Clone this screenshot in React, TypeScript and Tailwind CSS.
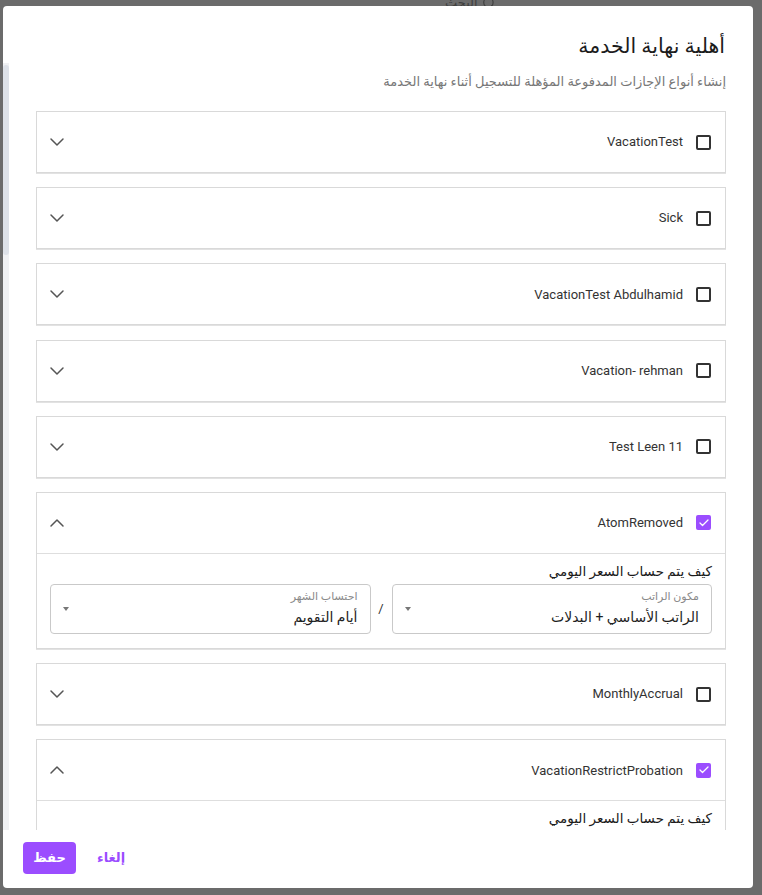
import React from 'react';
import { ChevronDown, ChevronUp, Check, Search } from 'lucide-react';

type Item = { name: string; checked: boolean };

const items: Item[] = [
  { name: 'VacationTest', checked: false },
  { name: 'Sick', checked: false },
  { name: 'VacationTest Abdulhamid', checked: false },
  { name: 'Vacation- rehman', checked: false },
  { name: 'Test Leen 11', checked: false },
  { name: 'AtomRemoved', checked: true },
  { name: 'MonthlyAccrual', checked: false },
  { name: 'VacationRestrictProbation', checked: true },
  { name: 'Annual Leave', checked: true },
  { name: 'Hajj Leave', checked: false },
];

const Checkbox: React.FC<{ checked: boolean }> = ({ checked }) =>
  checked ? (
    <span className="w-[15px] h-[15px] rounded-[2px] bg-[#9b4dff] flex items-center justify-center shrink-0">
      <Check size={12} strokeWidth={2.5} className="text-white" />
    </span>
  ) : (
    <span className="w-[15px] h-[15px] rounded-[2px] border-2 border-[#333333] shrink-0" />
  );

const SelectBox: React.FC<{ label: string; value: string }> = ({ label, value }) => (
  <div className="flex-1 h-[50px] border border-[#c9c9c9] rounded-[4px] flex items-center px-3">
    <div className="flex flex-col flex-1 leading-none">
      <span className="text-[11px] text-[#8a8a8a] leading-[14px]">{label}</span>
      <span className="text-[14px] text-[#1f1f1f] leading-[20px] mt-[3px]">{value}</span>
    </div>
    <span className="w-0 h-0 border-l-[3.5px] border-r-[3.5px] border-t-[4px] border-l-transparent border-r-transparent border-t-[#777777]" />
  </div>
);

const AccordionItem: React.FC<{ item: Item }> = ({ item }) => (
  <div className="border border-[#d9d9d9] shadow-[0_1px_0_#e2e2e2] bg-white shrink-0">
    <div className="h-[60px] flex items-center pr-[14px] pl-[8px]">
      <Checkbox checked={item.checked} />
      <span className="mr-[13px] text-[13px] text-[#333333]">{item.name}</span>
      <span className="mr-auto text-[#555555]">
        {item.checked ? <ChevronUp size={24} strokeWidth={1.5} /> : <ChevronDown size={24} strokeWidth={1.5} />}
      </span>
    </div>
    {item.checked && (
      <div className="border-t border-[#dedede] px-[13px] pt-[7px] pb-[14px]">
        <div className="text-[13.5px] text-[#1a1a1a] leading-[20px] font-medium mb-[3px]">كيف يتم حساب السعر اليومي</div>
        <div className="flex items-center">
          <SelectBox label="مكون الراتب" value="الراتب الأساسي + البدلات" />
          <span className="w-[21px] text-center text-[13px] text-[#333333]">/</span>
          <SelectBox label="احتساب الشهر" value="أيام التقويم" />
        </div>
      </div>
    )}
  </div>
);

export default function App() {
  return (
    <div
      className="relative w-full h-[895px] bg-[#6b6b6b] overflow-hidden"
      style={{ fontFamily: "Roboto, 'Noto Sans', 'DejaVu Sans', sans-serif" }}
    >
      <div dir="rtl" className="absolute top-[-7px] left-[445px] flex items-center gap-1 text-[13px] text-[#3f3f3f]">
        <Search size={14} />
        <span>البحث</span>
      </div>

      <div dir="rtl" className="absolute left-[3px] top-[6px] w-[750px] h-[882px] bg-white rounded-[4px] flex flex-col overflow-hidden">
        <div className="px-[28px] pt-[28px] pb-[5px]">
          <h2 className="text-[20.5px] text-[#1c1c1c] leading-[24px]">أهلية نهاية الخدمة</h2>
        </div>

        <div className="flex-1 min-h-0 flex">
          <div className="flex-1 min-w-0 overflow-hidden px-[27px] pt-[9px]">
            <p className="text-[13px] text-[#777777] leading-[20px] mb-[19px]">
              إنشاء أنواع الإجازات المدفوعة المؤهلة للتسجيل أثناء نهاية الخدمة
            </p>
            <div className="flex flex-col gap-[14.2px] pb-[20px]">
              {items.map((item) => (
                <AccordionItem key={item.name} item={item} />
              ))}
            </div>
          </div>
          {/* scrollbar (left side in rtl) */}
          <div className="w-[6px] bg-[#f0f1f3] shrink-0 pt-[2px]">
            <div className="h-[190px] rounded-[3px] bg-[#dde1e8]" />
          </div>
        </div>

        <div className="h-[58px] flex items-center justify-end gap-[20px] px-[20px] pb-[2px]">
          <button className="text-[13px] font-bold text-[#9b4dff] px-[1px]">إلغاء</button>
          <button className="h-[32px] w-[53px] rounded-[4px] bg-[#9b4dff] text-white text-[13px] font-bold">حفظ</button>
        </div>
      </div>
    </div>
  );
}
